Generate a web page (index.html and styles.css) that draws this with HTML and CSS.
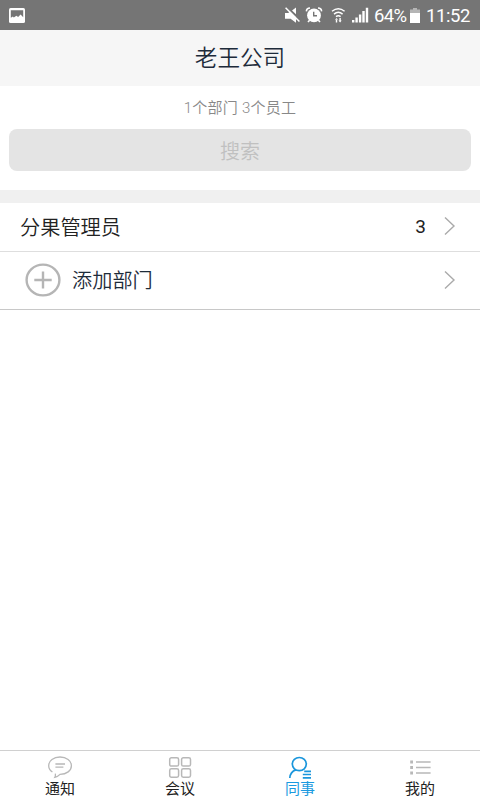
FILE: index.html
```html
<!DOCTYPE html>
<html lang="zh-CN">
<head>
<meta charset="utf-8">
<title>老王公司</title>
<link rel="stylesheet" href="styles.css">
</head>
<body>
<div class="app">
  <div class="status">
    <svg class="status-photo" width="16" height="15" viewBox="0 0 16 15"><rect width="16" height="15" rx="1.6" fill="#fff"/><path d="M1.8 2.2H14.2V9.2L11.6 6.4 9.1 9 7.4 7.7 4.8 9.6 3.9 8.5 1.8 9.8Z" fill="#757575"/></svg>
    <div class="status-right">
      <svg width="86" height="18" viewBox="0 0 86 18" fill="#fff">
        <path d="M0 6H3.2L5.2 4.5 11 10.2V15.7L5.6 11.8H0ZM7 3.4 11 .6V7.2Z"/><path d="M.6 .8 14.4 14.5" stroke="#fff" stroke-width="1.5"/>
        <circle cx="29" cy="8.4" r="6.9"/><path d="M21.4 4.4C21.5 2 23 1 25 1M36.6 4.4C36.5 2 35 1 33 1M24.6 13.2 23 15M33.4 13.2 35 15" fill="none" stroke="#fff" stroke-width="1.6"/><path d="M28.7 4.8V8.8H32" fill="none" stroke="#757575" stroke-width="1.4"/>
        <path d="M47 4.3Q53.3-.9 59.6 4.3M49 7.1Q53.3 3.4 57.6 7.1M51 9.6Q53.3 7.8 55.6 9.6" fill="none" stroke="#fff" stroke-width="1.4"/><path d="M50 12.7H53L51.5 10.9ZM50.8 12.5H52.2V15.4H50.8ZM54.4 11H55.8V13.4H56.7L55.1 15.4 53.5 13.4H54.4Z"/>
        <path d="M67 13H69.4V15.6H67ZM70.4 10.5H72.8V15.6H70.4ZM73.9 7.5H76.3V15.6H73.9ZM77.3 4H79.7V15.6H77.3ZM80.8 .8H83.2V15.6H80.8Z"/>
      </svg>
      <span class="percent">64%</span>
      <svg class="battery" width="10" height="15" viewBox="0 0 10 15"><path d="M3 0H7V1.6H10V5H0V1.6H3Z" fill="#b5b5b5"/><path d="M0 5H10V15H0Z" fill="#fff"/></svg>
      <span class="clock">11:52</span>
    </div>
  </div>
  <header class="title">老王公司</header>
  <section class="top">
    <div class="summary">1个部门 3个员工</div>
    <div class="search">搜索</div>
  </section>
  <main class="list">
    <div class="row row-dept">
      <span class="name">分果管理员</span><span class="count">3</span>
      <svg class="chevron" width="12" height="20" viewBox="0 0 12 20"><path d="M1 1.5 10 10 1 18.5"/></svg>
    </div>
    <div class="row row-add">
      <svg class="plus" width="36" height="34" viewBox="0 0 36 34"><ellipse cx="18" cy="17" rx="16.4" ry="15.4"/><path d="M9.3 17H26.7M18 8.5V25.5"/></svg>
      <span class="name">添加部门</span>
      <svg class="chevron" width="12" height="20" viewBox="0 0 12 20"><path d="M1 1.5 10 10 1 18.5"/></svg>
    </div>
  </main>
  <nav class="tabs">
    <div class="tab">
      <svg width="26" height="24" viewBox="0 0 26 24" stroke-width="1.3"><path d="M5.4 17C3 15.4 1.7 13 1.7 10.7 1.7 5.8 6.6 2 13 2S24.4 5.8 24.4 10.7 19.6 19.4 13 19.4C11.6 20.9 9.8 22 7.8 22.4 8.6 21 8.5 19.8 8.3 18.6M8.4 9H18M8.4 12.2H16.4"/></svg>
      <span>通知</span>
    </div>
    <div class="tab">
      <svg width="26" height="24" viewBox="0 0 26 24" stroke-width="1.5"><rect x="2.7" y="2.7" width="8.9" height="8.4" rx="1.7"/><rect x="14.6" y="2.7" width="8.9" height="8.4" rx="1.7"/><rect x="2.7" y="13.8" width="8.9" height="8.4" rx="1.7"/><rect x="14.6" y="13.8" width="8.9" height="8.4" rx="1.7"/></svg>
      <span>会议</span>
    </div>
    <div class="tab active">
      <svg width="26" height="24" viewBox="0 0 26 24" stroke-width="1.7"><ellipse cx="12.3" cy="9.1" rx="7" ry="6.6"/><path d="M8.9 14.9C5.2 16.1 3.1 19 2.8 23M17.2 16.3H24M15.8 19.5H24M15.8 22.8H24"/></svg>
      <span>同事</span>
    </div>
    <div class="tab">
      <svg width="26" height="24" viewBox="0 0 26 24"><path d="M9 7H23.6M9 12.5H23.6M9 18H23.6" stroke-width="1.5"/><path d="M3.2 7H6M3.2 12.5H6M3.2 18H6" stroke-width="2.8"/></svg>
      <span>我的</span>
    </div>
  </nav>
</div>
</body>
</html>
```
FILE: styles.css
```css
* { box-sizing: border-box; }
body { margin: 0; background: #fff; font-family: Roboto, "Noto Sans CJK SC", sans-serif; }
svg { display: block; flex: none; }
.app { width: 480px; height: 800px; display: flex; flex-direction: column; overflow: hidden; }
.status { height: 30px; flex: none; background: #757575; color: #fff; display: flex; align-items: center; justify-content: space-between; padding: 0 10px 0 9px; }
.status-right { display: flex; align-items: center; font-size: 18.5px; line-height: 30px; padding-top: 1px; }
.percent { margin-left: 3px; width: 33px; letter-spacing: -0.6px; white-space: nowrap; }
.battery { margin: 0 6px 0 3px; }
.clock { letter-spacing: -0.4px; width: 44px; white-space: nowrap; }
.title { height: 56px; flex: none; background: #f6f6f6; color: #1d2b3a; font-size: 22.6px; font-weight: 350; line-height: 58px; text-align: center; overflow: hidden; }
.top { height: 104px; flex: none; padding: 8px 9px 0; text-align: center; }
.summary { height: 35px; line-height: 28px; font-size: 15px; letter-spacing: 0.25px; color: #888; font-weight: 350; }
.search { height: 42px; border-radius: 8px; background: #e4e4e4; color: #c0c0c0; font-size: 20px; line-height: 46px; font-weight: 350; }
.list { flex: 1; border-top: 13px solid #f0f0f0; }
.row { display: flex; align-items: center; padding: 0 24px 3px 20px; font-size: 20.2px; }
.row-dept { height: 49px; border-bottom: 1px solid #dedede; color: #222; }
.row-dept .name { padding-top: 1px; }
.row-add { height: 58px; border-bottom: 1px solid #c8c8c8; color: #1d2b3a; padding-left: 25px; padding-bottom: 2px; }
.row-add .name { padding-bottom: 1px; }
.count { font-size: 19px; margin-right: 18px; padding-top: 2px; }
.name { flex: 1; font-weight: 350; }
.chevron { fill: none; stroke: #aaa; stroke-width: 1.4; }
.plus { fill: none; stroke: #b5b5b5; stroke-width: 2.4; margin-right: 11px; }
.tabs { height: 50px; flex: none; border-top: 1px solid #d0d0d0; display: grid; grid-template-columns: repeat(4, 1fr); }
.tab { display: flex; flex-direction: column; align-items: center; padding-top: 4px; font-size: 15px; line-height: 20px; color: #222; }
.tab svg { fill: none; stroke: #b8b8b8; }
.tab.active { color: #1a9ae0; }
.tab.active svg { stroke: #1a96dc; }
```
